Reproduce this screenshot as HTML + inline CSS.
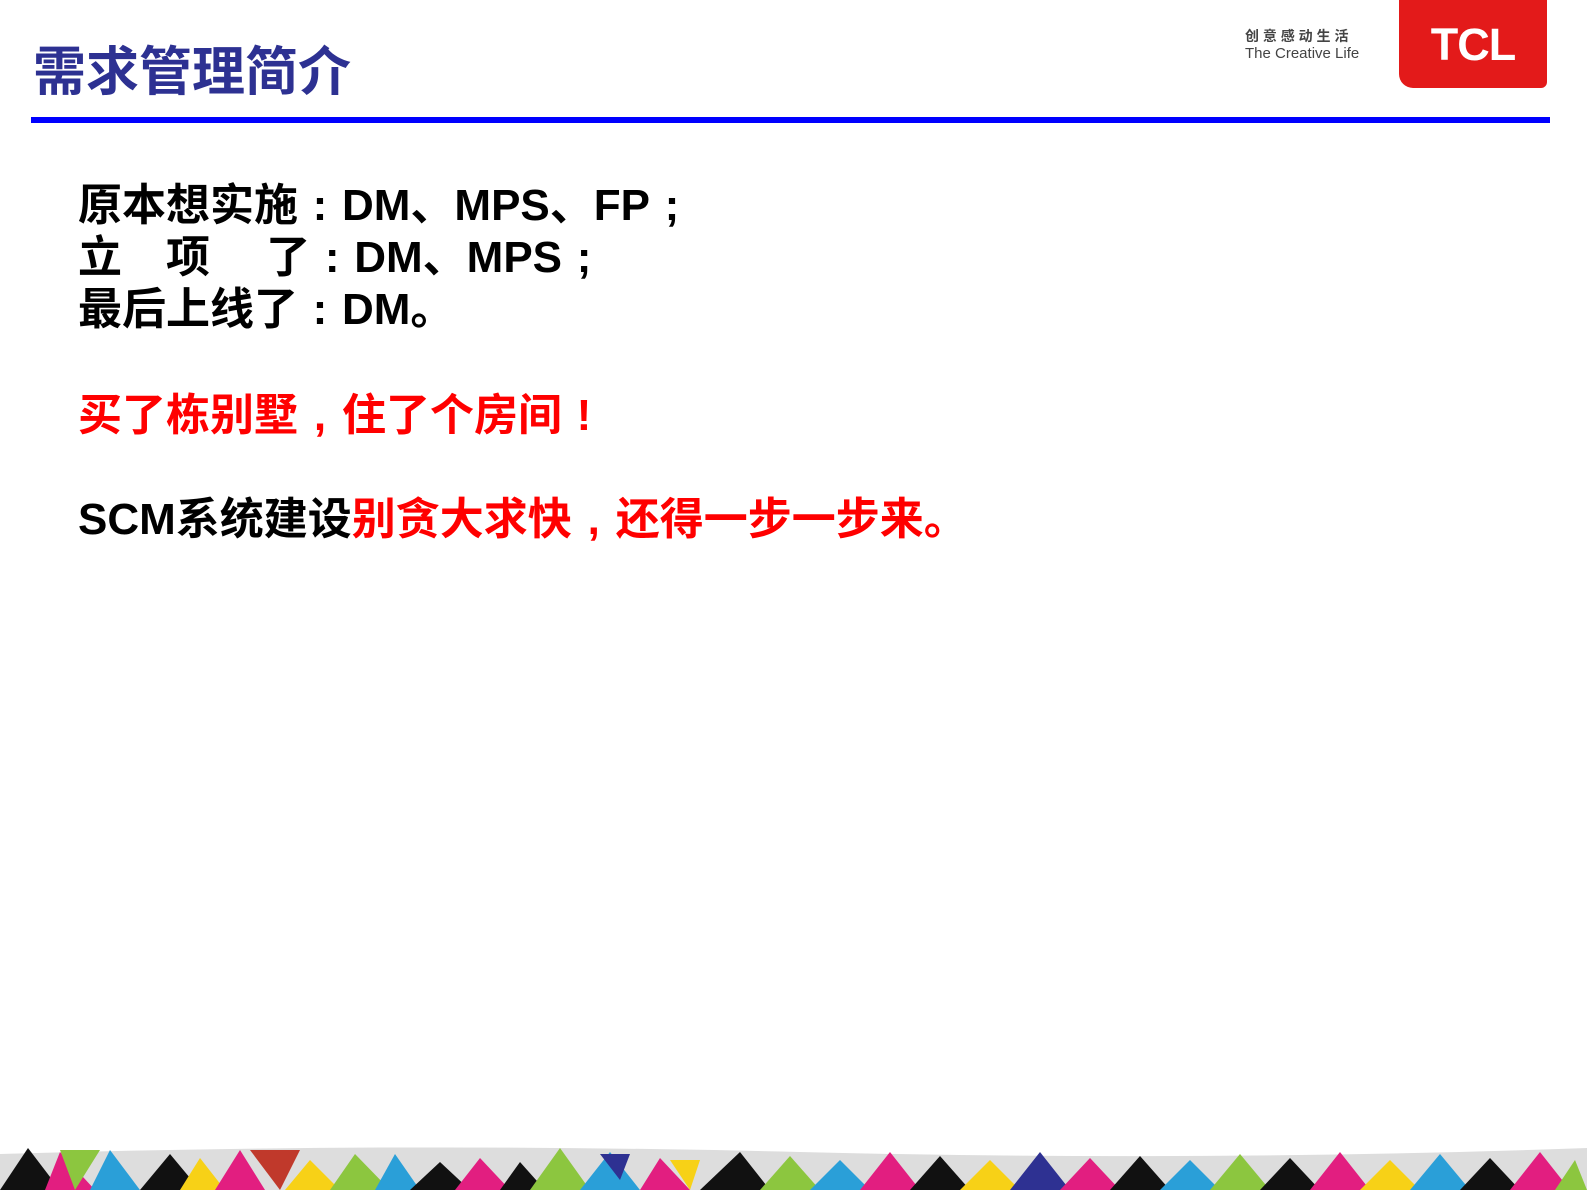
<!DOCTYPE html>
<html><head><meta charset="utf-8"><style>
body{margin:0;width:1587px;height:1190px;background:#fff;position:relative;overflow:hidden;font-family:"Liberation Sans","Noto Sans CJK SC",sans-serif}
.t{position:absolute;left:33px;top:30px;font-size:53px;font-weight:bold;color:#2d3192}
.bar{position:absolute;left:31px;top:117px;width:1519px;height:6px;background:#0000ff}
.l{position:absolute;left:78px;font-size:44px;font-weight:bold;color:#000;white-space:pre;line-height:52px}
.r{color:#f00}
.p{display:inline-block;width:44px;text-align:center}
.logo{position:absolute;left:1399px;top:0;width:148px;height:88px;background:#e31a1a;border-radius:0 0 6px 14px;color:#fff;font-weight:900;font-size:45px;text-align:center;line-height:90px;letter-spacing:-1px}
.slog{position:absolute;left:1245px;top:28px;font-size:14px;color:#444;line-height:17px;font-weight:bold}
</style></head><body>
<div class="t">需求管理简介</div>
<div class="slog">创 意 感 动 生 活<br><span style="font-weight:normal;font-size:15px">The Creative Life</span></div>
<div class="logo">TCL</div>
<div class="bar"></div>
<div class="l" style="top:180px">原本想实施<span class="p">:</span>DM、MPS、FP<span class="p">;</span></div>
<div class="l" style="top:232px">立　项　 了<span class="p">:</span>DM、MPS<span class="p">;</span></div>
<div class="l" style="top:284px">最后上线了<span class="p">:</span>DM。</div>
<div class="l r" style="top:390px">买了栋别墅<span class="p">,</span>住了个房间<span class="p">!</span></div>
<div class="l" style="top:494px">SCM系统建设<span class="r">别贪大求快<span class="p">,</span>还得一步一步来。</span></div>
<svg style="position:absolute;left:0;top:1140px" width="1587" height="50">
<path d="M0 14 Q400 2 800 12 T1587 8 V50 H0Z" fill="#ddd"/>
<polygon points="0,50 28,8 60,50" fill="#111"/>
<polygon points="45,50 60,12 95,50" fill="#e21e80"/>
<polygon points="60,10 100,10 75,50" fill="#8cc63f"/>
<polygon points="90,50 110,10 140,50" fill="#2a9fd8"/>
<polygon points="140,50 170,14 200,50" fill="#111"/>
<polygon points="180,50 200,18 225,50" fill="#f7d117"/>
<polygon points="215,50 240,10 265,50" fill="#e21e80"/>
<polygon points="250,10 300,10 280,50" fill="#c0392b"/>
<polygon points="285,50 310,20 340,50" fill="#f7d117"/>
<polygon points="330,50 355,14 390,50" fill="#8cc63f"/>
<polygon points="375,50 395,14 420,50" fill="#2a9fd8"/>
<polygon points="410,50 440,22 470,50" fill="#111"/>
<polygon points="455,50 480,18 510,50" fill="#e21e80"/>
<polygon points="500,50 520,22 545,50" fill="#111"/>
<polygon points="530,50 560,8 590,50" fill="#8cc63f"/>
<polygon points="580,50 610,12 640,50" fill="#2a9fd8"/>
<polygon points="600,14 630,14 620,40" fill="#2e3192"/>
<polygon points="640,50 660,18 690,50" fill="#e21e80"/>
<polygon points="670,20 700,20 690,50" fill="#f7d117"/>
<polygon points="700,50 740,12 770,50" fill="#111"/>
<polygon points="760,50 790,16 820,50" fill="#8cc63f"/>
<polygon points="810,50 840,20 870,50" fill="#2a9fd8"/>
<polygon points="860,50 890,12 920,50" fill="#e21e80"/>
<polygon points="910,50 940,16 970,50" fill="#111"/>
<polygon points="960,50 990,20 1020,50" fill="#f7d117"/>
<polygon points="1010,50 1040,12 1070,50" fill="#2e3192"/>
<polygon points="1060,50 1090,18 1120,50" fill="#e21e80"/>
<polygon points="1110,50 1140,16 1170,50" fill="#111"/>
<polygon points="1160,50 1190,20 1220,50" fill="#2a9fd8"/>
<polygon points="1210,50 1240,14 1270,50" fill="#8cc63f"/>
<polygon points="1260,50 1290,18 1320,50" fill="#111"/>
<polygon points="1310,50 1340,12 1370,50" fill="#e21e80"/>
<polygon points="1360,50 1390,20 1420,50" fill="#f7d117"/>
<polygon points="1410,50 1440,14 1470,50" fill="#2a9fd8"/>
<polygon points="1460,50 1490,18 1520,50" fill="#111"/>
<polygon points="1510,50 1540,12 1570,50" fill="#e21e80"/>
<polygon points="1555,50 1575,20 1587,50" fill="#8cc63f"/>
</svg>
</body></html>
